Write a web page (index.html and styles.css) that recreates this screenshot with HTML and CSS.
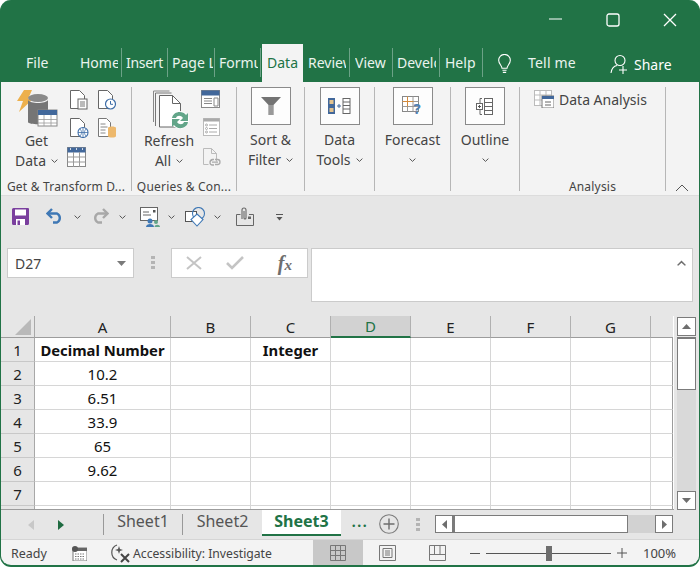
FILE: index.html
```html
<!DOCTYPE html>
<html lang="en">
<head>
<meta charset="utf-8">
<title>Excel</title>
<link rel="stylesheet" href="styles.css">
</head>
<body>
<svg class="defs" aria-hidden="true">
  <symbol id="chev" viewBox="0 0 7 4"><path d="M.6.6 3.5 3.4 6.4.6" fill="none" stroke="#555" stroke-width="1"/></symbol>
</svg>
<div class="app">
  <header class="titlebar">
    <svg class="winbtn" width="14" height="14" viewBox="0 0 14 14"><path d="M0 6h13" stroke="#fff" stroke-width="1.2"/></svg>
    <svg class="winbtn" width="14" height="14" viewBox="0 0 14 14"><rect x="1" y="1" width="12" height="12" rx="2" fill="none" stroke="#fff" stroke-width="1.3"/></svg>
    <svg class="winbtn" width="14" height="14" viewBox="0 0 14 14"><path d="M1 1l12 12M13 1 1 13" stroke="#fff" stroke-width="1.3"/></svg>
  </header>
  <nav class="tabs">
    <div class="tab tab-file"><span class="tab-label">File</span></div>
    <div class="tab w47 sep"><span class="tab-label">Home</span></div>
    <div class="tab w46 sep pl4 tight"><span class="tab-label">Insert</span></div>
    <div class="tab w47 sep pl4 tab-page"><span class="tab-label">Page Layout</span></div>
    <div class="tab w47 sep pl4 tab-form"><span class="tab-label">Formulas</span></div>
    <div class="tab tab-active"><span class="tab-label">Data</span></div>
    <div class="tab w47 sep"><span class="tab-label">Review</span></div>
    <div class="tab w43 sep"><span class="tab-label">View</span></div>
    <div class="tab w47 sep pl4"><span class="tab-label">Developer</span></div>
    <div class="tab w43 sep"><span class="tab-label">Help</span></div>
    <svg class="bulb" width="15" height="20" viewBox="0 0 17 24"><path d="M5.500 17c0-3-4-5-4-9.500a7 7 0 0 1 14 0c0 4.500-4 6.500-4 9.500zM6 19.500h5M6.500 22h4" fill="none" stroke="#fff" stroke-width="1.300"/></svg>
    <span class="tellme">Tell me</span>
    <div class="share">
      <svg width="20" height="20" viewBox="0 0 20 20"><circle cx="10" cy="6.500" r="5" fill="none" stroke="#fff" stroke-width="1.100"/><path d="M1 19c.5-4 3-7 6-7.500M13 12v8M9 16h8" fill="none" stroke="#fff" stroke-width="1.100"/></svg>
      <span>Share</span>
    </div>
  </nav>

  <section class="ribbon">
    <div class="group g1">
      <div class="group-body">
        <div class="bigbtn b-get">
          <svg width="42" height="42" viewBox="0 0 42 42">
            <path d="M7 0h8l-4 9h5L2 22l4-11H0z" fill="#edb04c"/>
            <ellipse cx="21" cy="8" rx="10" ry="4" fill="#8a8a8a"/>
            <path d="M11 10v22c0 3 20 3 20 0V10c-2 4-18 4-20 0z" fill="#757575"/>
            <rect x="21" y="20" width="19" height="16" fill="#fff" stroke="#888"/>
            <rect x="21" y="20" width="19" height="5" fill="#42689b"/>
            <path d="M21 29.500h19M21 33h19M27 25v11M34 25v11" stroke="#999" stroke-width=".8"/>
          </svg>
          <span class="btn-text">Get</span>
          <span class="btn-text">Data <svg class="chev"><use href="#chev"/></svg></span>
        </div>
        <div class="smallgrid">
          <svg width="20" height="20" viewBox="0 0 20 20"><path d="M1.500.500h9l5 5v13h-14z" fill="#fff" stroke="#666"/><rect x="9" y="9" width="9" height="10" fill="#fff" stroke="#666"/><path d="M11 12h5M11 14h5M11 16h5" stroke="#777"/></svg>
          <svg width="20" height="20" viewBox="0 0 20 20"><path d="M1.500.500h9l5 5v13h-14z" fill="#fff" stroke="#666"/><circle cx="13.500" cy="14" r="5" fill="#fff" stroke="#3f6ea8" stroke-width="1.200"/><path d="M13.500 11v3.300h2.500" fill="none" stroke="#3f6ea8"/></svg>
          <svg width="20" height="20" viewBox="0 0 20 20"><path d="M1.500.500h9l5 5v13h-14z" fill="#fff" stroke="#666"/><circle cx="14" cy="14.500" r="5" fill="#fff" stroke="#3f6ea8" stroke-width="1.100"/><path d="M9 14.500h10M14 9.500v10M11 11c2 2 2 5 0 7M17 11c-2 2-2 5 0 7" fill="none" stroke="#3f6ea8" stroke-width=".8"/></svg>
          <svg width="20" height="20" viewBox="0 0 20 20"><path d="M1.500.500h8l4 4v14h-12z" fill="#fff" stroke="#777"/><path d="M3.500 6h5M3.500 9h7M3.500 12h5M3.500 15h5" stroke="#888"/><path d="M11 10c0-2 8-2 8 0v8c0 2-8 2-8 0z" fill="#edb86c"/></svg>
          <svg class="wide" width="19" height="20" viewBox="0 0 19 20"><rect x=".5" y=".5" width="18" height="19" fill="#fff" stroke="#888"/><rect x=".5" y=".5" width="18" height="5" fill="#42689b"/><path d="M.5 10h18M.5 15h18M6.500 5v15M12.500 5v15" stroke="#999"/><path d="M3 2h1M9 2h1M15 2h1" stroke="#fff" stroke-width="1.500"/></svg>
        </div>
      </div>
      <div class="group-label">Get &amp; Transform D...</div>
    </div>

    <div class="group g2">
      <div class="group-body">
        <div class="bigbtn b-refresh">
          <svg width="38" height="42" viewBox="0 0 38 42">
            <path d="M.5 1h16M.5 1v31" fill="none" stroke="#888"/>
            <path d="M2.500 3h16M2.500 3v33" fill="none" stroke="#777"/>
            <path d="M6.500 5.500h13l8 8V37h-21z" fill="#fff" stroke="#666"/>
            <path d="M19.500 5.500v8h8" fill="none" stroke="#666"/>
            <circle cx="27" cy="30" r="9" fill="#fff"/>
            <path d="M19 28c1-7 11-8 14-3l2-2v8h-8l3-3c-2-3-6-3-7 0z" fill="#62a589"/>
            <path d="M35 32c-1 7-11 8-14 3l-2 2v-8h8l-3 3c2 3 6 3 7 0z" fill="#62a589"/>
          </svg>
          <span class="btn-text">Refresh</span>
          <span class="btn-text">All <svg class="chev"><use href="#chev"/></svg></span>
        </div>
        <div class="stack">
          <svg width="20" height="19" viewBox="0 0 20 19"><rect x=".5" y=".5" width="18" height="17" fill="#fff" stroke="#888"/><rect x=".5" y=".5" width="18" height="5" fill="#42689b"/><path d="M3 8.500h8M3 11h8M3 13.500h8M13 8h4v8h-4z" fill="none" stroke="#888"/></svg>
          <svg class="st2" width="18" height="19" viewBox="0 0 18 19"><rect x=".5" y=".5" width="16" height="17" fill="#fff" stroke="#bbb"/><rect x=".5" y=".5" width="16" height="3" fill="#aaa"/><path d="M6 7h8M6 10.500h8M6 14h8" stroke="#aaa"/><circle cx="3.500" cy="7" r="1" fill="none" stroke="#aaa"/><circle cx="3.500" cy="10.500" r="1" fill="none" stroke="#aaa"/><circle cx="3.500" cy="14" r="1" fill="none" stroke="#aaa"/></svg>
          <svg class="st3" width="18" height="19" viewBox="0 0 18 19"><path d="M.5.500h8l5 5v8M.5.500v16h5M8.500.500v5h5" fill="none" stroke="#bbb"/><path d="M7 14a2.500 2.500 0 0 1 2.500-2.500h1.500M11 17H9.500a2.500 2.500 0 0 1 0-5M12 11.500h2.500a2.500 2.500 0 0 1 0 5H12M9 14.200h6" fill="none" stroke="#aaa" stroke-width="1.300"/></svg>
        </div>
      </div>
      <div class="group-label">Queries &amp; Con...</div>
    </div>

    <div class="group g3">
      <div class="framed-col">
        <div class="frame">
          <svg width="22" height="22" viewBox="0 0 22 22"><path d="M1 2h20l-7.500 8v10h-5V10z" fill="#737373"/><path d="M9 10h4v10H9z" fill="#999"/></svg>
        </div>
        <span class="btn-text">Sort &amp;</span>
        <span class="btn-text">Filter <svg class="chev"><use href="#chev"/></svg></span>
      </div>
    </div>

    <div class="group g4">
      <div class="framed-col">
        <div class="frame">
          <svg width="24" height="20" viewBox="0 0 24 20"><rect x="0" y="2" width="7" height="16" fill="#42689b"/><rect x="1.500" y="4" width="4" height="4" fill="#e3c38f"/><rect x="1.500" y="12" width="4" height="4" fill="#e3c38f"/><path d="M9 10h4M11 8v4" stroke="#42689b"/><rect x="15" y="2.500" width="7" height="15" fill="#fff" stroke="#666"/><path d="M15 6h7M15 9.500h7M15 13h7" stroke="#666"/></svg>
        </div>
        <span class="btn-text">Data</span>
        <span class="btn-text">Tools <svg class="chev"><use href="#chev"/></svg></span>
      </div>
    </div>

    <div class="group g5">
      <div class="framed-col">
        <div class="frame">
          <svg width="22" height="20" viewBox="0 0 22 20"><rect x=".5" y=".5" width="16" height="15" fill="#fff" stroke="#888"/><path d="M.5 5.500h16M.5 10.500h16M5.500.500v15M11 .500v15" stroke="#999"/><path d="M.5 5.500h11M5.500.500v10" stroke="#d28a3c"/><text class="q" x="11.500" y="18">?</text></svg>
        </div>
        <span class="btn-text">Forecast</span>
        <span class="btn-chev"><svg class="chev"><use href="#chev"/></svg></span>
      </div>
    </div>

    <div class="group g6">
      <div class="framed-col">
        <div class="frame">
          <svg width="18" height="17" viewBox="0 0 18 17"><path d="M6 .500H4v16h2" fill="none" stroke="#666"/><rect x=".5" y="5.500" width="6" height="6" fill="#fff" stroke="#666"/><path d="M2 8.500h3M3.500 7v3" stroke="#555"/><rect x="8.500" y=".5" width="8" height="16" fill="#fff" stroke="#666"/><path d="M8.500 4.500h8M8.500 8.500h8M8.500 12.500h8" stroke="#666"/></svg>
        </div>
        <span class="btn-text">Outline</span>
        <span class="btn-chev"><svg class="chev"><use href="#chev"/></svg></span>
      </div>
    </div>

    <div class="group g7">
      <div class="analysis-row">
        <svg width="20" height="18" viewBox="0 0 20 18"><rect x=".5" y=".5" width="17" height="15" fill="#fff" stroke="#bbb"/><path d="M.5 5h17M.5 10h17M6 .500v15M12 .500v15" stroke="#bbb"/><rect x="8" y="6" width="12" height="12" fill="#fff" stroke="#777"/><rect x="8" y="6" width="12" height="3" fill="#42689b"/><path d="M11 12h6M11 15h6" stroke="#666"/></svg>
        <span class="btn-text">Data Analysis</span>
      </div>
      <div class="group-label">Analysis</div>
    </div>

    <div class="ribbon-end">
      <svg width="14" height="8" viewBox="0 0 14 8"><path d="M1 7 7 1l6 6" fill="none" stroke="#555"/></svg>
    </div>
  </section>

  <section class="grey">
    <div class="qat">
      <svg class="i-save" width="17" height="17" viewBox="0 0 17 17"><path d="M0 1.500A1.500 1.500 0 0 1 1.500 0H16a1 1 0 0 1 1 1v14.500a1.500 1.500 0 0 1-1.500 1.500h-14A1.500 1.500 0 0 1 0 15.500z" fill="#7a3f9e"/><rect x="3" y="1.500" width="11" height="6" fill="#fff"/><rect x="4" y="11" width="9" height="6" fill="#fff"/><rect x="5.500" y="12.500" width="2.500" height="4.500" fill="#7a3f9e"/></svg>
      <svg class="i-undo" width="18" height="16" viewBox="0 0 18 16"><path d="M6 1 1.500 5.500 6 10" fill="none" stroke="#3f78b5" stroke-width="2.400"/><path d="M2 5.500h9a5 5 0 0 1 0 9H7" fill="none" stroke="#3f78b5" stroke-width="2.400"/></svg>
      <svg class="chev c-undo"><use href="#chev"/></svg>
      <svg class="i-redo" width="18" height="16" viewBox="0 0 18 16"><path d="M12 1l4.500 4.500L12 10" fill="none" stroke="#a8a8a8" stroke-width="2.400"/><path d="M16 5.500H7a5 5 0 0 0 0 9h4" fill="none" stroke="#a8a8a8" stroke-width="2.400"/></svg>
      <svg class="chev c-redo"><use href="#chev"/></svg>
      <svg class="i-share" width="20" height="20" viewBox="0 0 20 20"><rect x=".5" y=".5" width="17" height="13" fill="#fff" stroke="#666"/><path d="M3 5h6M3 8h8" stroke="#666"/><rect x="13" y="3" width="2.500" height="2.500" fill="#555"/><circle cx="10" cy="14" r="2.500" fill="#3f78b5"/><path d="M6 20c0-4 8-4 8 0z" fill="#3f78b5"/><circle cx="16" cy="15" r="2" fill="#62a589"/><path d="M14.500 20c0-3 5.500-3 5.500 0z" fill="#62a589"/></svg>
      <svg class="chev c-share"><use href="#chev"/></svg>
      <svg class="i-shapes" width="21" height="20" viewBox="0 0 21 20"><rect x=".5" y="4.500" width="11" height="10" fill="#fff" stroke="#555"/><circle cx="13.500" cy="6.500" r="6" fill="none" stroke="#3f78b5" stroke-width="1.100"/><path d="M12 7l6 5.500-6 6.500-6-6.500z" fill="#fff" stroke="#3f78b5" stroke-width="1.100"/></svg>
      <svg class="chev c-shapes"><use href="#chev"/></svg>
      <svg class="i-clip" width="18" height="19" viewBox="0 0 18 19"><path d="M.5 7.500h4M13 7.500h4.500v11H.5v-11" fill="none" stroke="#666"/><path d="M6 12V3a2 2 0 0 1 4 0v8a1 1 0 0 1-2 0V4" fill="none" stroke="#666" stroke-width="1.100"/><rect x="12" y="9.500" width="3" height="2.500" fill="#666"/></svg>
      <svg class="i-more" width="7" height="7" viewBox="0 0 7 7"><path d="M0 .500h7" stroke="#555"/><path d="M.5 3h6l-3 3.500z" fill="#555"/></svg>
    </div>
    <div class="formula">
      <div class="namebox"><span>D27</span><svg width="9" height="5" viewBox="0 0 9 5"><path d="M0 0h9L4.500 5z" fill="#7a7a7a"/></svg></div>
      <div class="grip"><i></i><i></i><i></i></div>
      <div class="fxbox">
        <svg width="16" height="14" viewBox="0 0 16 14"><path d="M1 1l14 12M15 1 1 13" stroke="#c4c4c4" stroke-width="2"/></svg>
        <svg class="check" width="18" height="14" viewBox="0 0 18 14"><path d="M1 7l5 5L17 1" fill="none" stroke="#c4c4c4" stroke-width="2.600"/></svg>
        <span class="fx">f<small>x</small></span>
      </div>
      <div class="input">
        <svg width="9" height="6" viewBox="0 0 9 6"><path d="M0 5 4.500 .5 9 5 7.800 5.800 4.500 2.800 1.200 5.800z" fill="#6e6e6e"/></svg>
      </div>
    </div>
  </section>

  <section class="sheet-area">
    <div class="sheet">
      <div class="hd corner"><svg width="16" height="16" viewBox="0 0 16 16"><path d="M16 0v16H0z" fill="#b9b9b9"/></svg></div>
      <div class="hd ch">A</div><div class="hd ch">B</div><div class="hd ch">C</div><div class="hd ch ch-sel">D</div><div class="hd ch">E</div><div class="hd ch">F</div><div class="hd ch">G</div><div class="hd ch ch-last"></div>

      <div class="hd rh">1</div><div class="c b">Decimal Number</div><div class="c"></div><div class="c b">Integer</div><div class="c"></div><div class="c"></div><div class="c"></div><div class="c"></div><div class="c"></div>
      <div class="hd rh">2</div><div class="c">10.2</div><div class="c"></div><div class="c"></div><div class="c"></div><div class="c"></div><div class="c"></div><div class="c"></div><div class="c"></div>
      <div class="hd rh">3</div><div class="c">6.51</div><div class="c"></div><div class="c"></div><div class="c"></div><div class="c"></div><div class="c"></div><div class="c"></div><div class="c"></div>
      <div class="hd rh">4</div><div class="c">33.9</div><div class="c"></div><div class="c"></div><div class="c"></div><div class="c"></div><div class="c"></div><div class="c"></div><div class="c"></div>
      <div class="hd rh">5</div><div class="c">65</div><div class="c"></div><div class="c"></div><div class="c"></div><div class="c"></div><div class="c"></div><div class="c"></div><div class="c"></div>
      <div class="hd rh">6</div><div class="c">9.62</div><div class="c"></div><div class="c"></div><div class="c"></div><div class="c"></div><div class="c"></div><div class="c"></div><div class="c"></div>
      <div class="hd rh">7</div><div class="c"></div><div class="c"></div><div class="c"></div><div class="c"></div><div class="c"></div><div class="c"></div><div class="c"></div><div class="c"></div>
      <div class="hd rh"></div><div class="c"></div><div class="c"></div><div class="c"></div><div class="c"></div><div class="c"></div><div class="c"></div><div class="c"></div><div class="c"></div>
    </div>
    <div class="vscroll">
      <div class="sb-btn"><svg width="9" height="5" viewBox="0 0 9 5"><path d="M0 5h9L4.500 0z" fill="#6e6e6e"/></svg></div>
      <div class="vthumb"></div>
      <div class="vtrack"></div>
      <div class="sb-btn"><svg width="9" height="5" viewBox="0 0 9 5"><path d="M0 0h9L4.500 5z" fill="#6e6e6e"/></svg></div>
    </div>
  </section>

  <section class="sheetbar">
    <div class="navs">
      <svg width="6" height="10" viewBox="0 0 6 10"><path d="M6 0v10L0 5z" fill="#c8c8c8"/></svg>
      <svg width="6" height="10" viewBox="0 0 6 10"><path d="M0 0v10l6-5z" fill="#1f6b41"/></svg>
    </div>
    <div class="stab s1">Sheet1</div>
    <div class="stab s2">Sheet2</div>
    <div class="stab stab-on">Sheet3</div>
    <div class="more">...</div>
    <svg class="addsheet" width="20" height="20" viewBox="0 0 20 20"><circle cx="10" cy="10" r="9.300" fill="none" stroke="#7b7b7b" stroke-width="1.100"/><path d="M10 4.500v11M4.500 10h11" stroke="#6e6e6e" stroke-width="1.400"/></svg>
    <div class="grip small"><i></i><i></i><i></i></div>
    <div class="hscroll">
      <div class="sb-btn h"><svg width="5" height="9" viewBox="0 0 5 9"><path d="M5 0v9L0 4.500z" fill="#6e6e6e"/></svg></div>
      <div class="hthumb"></div>
      <div class="htrack"></div>
      <div class="sb-btn h"><svg width="5" height="9" viewBox="0 0 5 9"><path d="M0 0v9l5-4.500z" fill="#6e6e6e"/></svg></div>
    </div>
  </section>

  <footer class="status">
    <span class="st-ready">Ready</span>
    <svg class="st-macro" width="15" height="15" viewBox="0 0 15 15"><rect x="1" y="2" width="14" height="13" fill="#fff" stroke="#777"/><rect x="1" y="2" width="14" height="3" fill="#666"/><circle cx="3" cy="3" r="3" fill="#555"/><path d="M3 8h10M3 10.500h10M3 13h10" stroke="#777" stroke-dasharray="1.500 1"/></svg>
    <svg class="st-acc" width="20" height="20" viewBox="0 0 20 20"><path d="M7 2a8 8 0 0 0 0 15" fill="none" stroke="#555" stroke-width="1.200"/><path d="M9 3l1 3 3 1-3 1-1 3-1-3-3-1 3-1z" fill="#555"/><path d="M11 11l8 8M19 11l-8 8" stroke="#444" stroke-width="2"/></svg>
    <span class="st-acc-t">Accessibility: Investigate</span>
    <div class="view-on"><svg width="16" height="16" viewBox="0 0 16 16"><path d="M.5.500h15v15H.5zM.5 5.500h15M.5 10.500h15M5.500.500v15M10.500.500v15" fill="none" stroke="#777"/></svg></div>
    <svg class="v2" width="17" height="16" viewBox="0 0 17 16"><path d="M.5.500h16v15H.5z" fill="none" stroke="#777"/><path d="M4 3.500h9v9H4zM6 6h5M6 8h5M6 10h5" fill="none" stroke="#777"/></svg>
    <svg class="v3" width="17" height="16" viewBox="0 0 17 16"><path d="M.5.500h16v15H.5zM.5 9.500h16M5.500.500v9M11 .500v9" fill="none" stroke="#777"/></svg>
    <div class="zoomer">
      <span class="z-minus"></span>
      <div class="z-track"><span class="z-thumb"></span></div>
      <svg width="10" height="10" viewBox="0 0 10 10"><path d="M0 5h10M5 0v10" stroke="#555"/></svg>
    </div>
    <span class="st-pct">100%</span>
  </footer>
</div>
</body>
</html>
```

FILE: styles.css
```css
* { box-sizing: border-box; }
html, body { margin: 0; padding: 0; background: #fff; }
body { width: 700px; height: 567px; overflow: hidden; font-family: "Noto Sans", "Open Sans", sans-serif; color: #333; }
.defs { display: none; }
svg { display: block; flex: none; }

.app {
  width: 700px; height: 567px;
  display: flex; flex-direction: column;
  background: #217346;
  border-radius: 11px;
  border: solid #217346;
  border-width: 0 1px 2px 1px;
  overflow: hidden;
}

.titlebar { height: 44px; flex: none; display: flex; justify-content: flex-end; align-items: flex-start; padding: 13px 22px 0 0; gap: 43px; }

.tabs { height: 38px; flex: none; display: flex; align-items: stretch; color: #fff; font-size: 14px; }
.tab { display: flex; align-items: center; padding: 0 4px 2px 5px; position: relative; flex: none; color: #eaf3ee; }
.tab-label { display: block; overflow: hidden; white-space: nowrap; flex: 1; }
.tab-file { width: 74px; padding-left: 25px; }
.w43 { width: 43px; } .w46 { width: 46px; } .w47 { width: 47px; }
.pl4 { padding-left: 4px; }
.tight { letter-spacing: -.3px; }
.tab-page { padding-right: 2px; }
.sep::after { content: ""; position: absolute; right: 0; top: 4px; bottom: 5px; width: 1px; background: #6ca287; }
.tab-form::after { right: 1px; }
.tab-active { width: 41px; background: #f3f3f3; color: #217346; }
.bulb { margin: 10px 0 0 14px; }
.tellme { margin: 9px 0 0 16px; color: #eaf3ee; letter-spacing: .2px; }
.share { display: flex; align-items: center; gap: 4px; margin: 9px 0 0 34px; height: 22px; }

.ribbon { height: 114px; flex: none; display: flex; background: #f3f3f3; padding: 5px 0; border-bottom: 1px solid #dcdcdc; }
.group { display: flex; flex-direction: column; border-right: 1px solid #b6b6b6; flex: none; height: 104px; position: relative; }
.g1 { width: 131px; } .g2 { width: 105px; } .g3 { width: 68px; } .g4 { width: 70px; } .g5 { width: 76px; } .g6 { width: 69px; } .g7 { width: 146px; }
.group-body { flex: 1; display: flex; }
.group-label { height: 18px; margin: -4px 0 -5px; padding-top: 5px; box-sizing: content-box; font-size: 12px; line-height: 18px; text-align: center; white-space: nowrap; color: #444; letter-spacing: .2px; }
.btn-text { font-size: 14px; line-height: 20px; white-space: nowrap; display: flex; align-items: center; justify-content: center; gap: 5px; color: #444; }
.chev { width: 7px; height: 4px; }
.bigbtn { display: flex; flex-direction: column; align-items: center; }
.b-get { width: 71px; padding-top: 3px; }
.b-get > svg { margin: 0 0 -1px 3px; }
.smallgrid { display: grid; grid-template-columns: 28px 20px; grid-auto-rows: 28px; padding-top: 3px; margin-left: -3px; }
.smallgrid .wide { margin: 1px 0 0 -2px; }
.b-refresh { width: 68px; padding: 3px 0 0 6px; }
.b-refresh > svg { margin: 0 0 -1px 6px; }
.stack { display: flex; flex-direction: column; padding: 3px 0 0 1px; }
.st2 { margin: 9px 0 0 2px; }
.st3 { margin: 11px 0 0 2px; }
.framed-col { display: flex; flex-direction: column; align-items: center; }
.frame { width: 40px; height: 38px; background: #fdfdfd; border: 1px solid #8a8a8a; display: flex; align-items: center; justify-content: center; margin-bottom: 5px; }
.btn-chev { height: 20px; display: flex; align-items: center; justify-content: center; }
.q { font: bold 15px "Noto Sans", sans-serif; fill: #4f81b3; }
.analysis-row { display: flex; align-items: flex-start; gap: 5px; padding: 3px 0 0 14px; flex: 1; }
.ribbon-end { flex: 1; display: flex; align-items: flex-end; justify-content: flex-end; padding: 0 10px 0 0; }
.ribbon-end svg { margin-bottom: -2px; }

.grey { height: 120px; flex: none; background: #e6e6e6; display: flex; flex-direction: column; }
.qat { height: 52px; flex: none; display: flex; align-items: flex-start; padding: 12px 0 0 11px; }
.c-undo, .c-redo, .c-share, .c-shapes { margin-top: 7px; }
.i-undo { margin-left: 17px; }
.c-undo { margin-left: 10px; }
.i-redo { margin-left: 10px; }
.c-redo { margin-left: 10px; }
.i-share { margin: -1px 0 0 14px; }
.c-share { margin-left: 8px; }
.i-shapes { margin: -1px 0 0 10px; }
.c-shapes { margin-left: 8px; }
.i-clip { margin: -1px 0 0 15px; }
.i-more { margin: 6px 0 0 22px; }

.formula { display: flex; align-items: flex-start; padding-left: 6px; height: 54px; }
.namebox { width: 127px; height: 30px; background: #fff; border: 1px solid #cbcbcb; display: flex; align-items: center; justify-content: space-between; padding: 0 7px; font-size: 14px; color: #444; }
.grip { width: 37px; display: flex; flex-direction: column; gap: 2px; align-items: center; padding-top: 8px; }
.grip i { width: 4px; height: 3px; background: #b4b4b4; }
.fxbox { width: 137px; height: 30px; background: #fff; border: 1px solid #cbcbcb; display: flex; align-items: center; padding: 0 15px 0 14px; justify-content: space-between; }
.check { margin-left: 0; position: relative; left: -5px; }
.fx { font: italic bold 20px "Liberation Serif", serif; color: #6e6e6e; }
.fx small { font-size: 15px; }
.input { width: 382px; height: 54px; margin-left: 3px; background: #fff; border: 1px solid #cbcbcb; padding: 11px 6px 0 0; display: flex; justify-content: flex-end; align-items: flex-start; }

.sheet-area { flex: none; display: flex; background: #e6e6e6; padding-top: 14px; height: 208px; margin-top: -14px; }
.sheet { width: 673px; height: 194px; display: grid; grid-template-columns: 34px 136px repeat(6, 80px) 22px; grid-template-rows: 22px repeat(7, 24px) 4px; background: #fff; border-bottom: 1px solid #9c9c9c; overflow: hidden; }
.hd { background: #e6e6e6; display: flex; align-items: center; justify-content: center; font-size: 15px; color: #222; }
.corner { align-items: flex-end; justify-content: flex-end; padding: 0 3px 2px 0; border-right: 1px solid #a8a8a8; border-bottom: 1px solid #9c9c9c; }
.ch { border-right: 1px solid #b0b0b0; border-bottom: 1px solid #9c9c9c; }
.ch-sel { background: #d2d2d2; color: #217346; border-bottom: 2px solid #217346; }
.ch-last { border-right: 0; }
.rh { border-right: 1px solid #a8a8a8; border-bottom: 1px solid #c8c8c8; }
.c { border-right: 1px solid #d6d6d6; border-bottom: 1px solid #d6d6d6; display: flex; align-items: center; justify-content: center; font-size: 15px; color: #111; white-space: nowrap; overflow: hidden; }
.c.b { font-weight: 700; font-size: 14.800px; }
.c:nth-child(9n) { border-right: 1px solid #9c9c9c; }
.vscroll { width: 25px; padding: 1px 3px 0 3px; display: flex; flex-direction: column; height: 194px; flex: none; }
.sb-btn { width: 19px; height: 19px; background: #fff; border: 1px solid #7b7b7b; display: flex; align-items: center; justify-content: center; flex: none; }
.vthumb { height: 53px; background: #fff; border: 1px solid #7b7b7b; border-top-width: 2px; flex: none; margin-top: 1px; }
.vtrack { flex: 1; background: #d9d9d9; }

.sheetbar { height: 30px; flex: none; background: #e6e6e6; display: flex; align-items: flex-start; border-bottom: 1px solid #d5d5d5; }
.navs { width: 103px; height: 21px; margin-top: 4px; display: flex; align-items: center; gap: 24px; padding-left: 27px; border-right: 1px solid #999; flex: none; }
.stab { font-size: 16px; display: flex; align-items: center; justify-content: center; color: #555; flex: none; }
.s1 { width: 79px; height: 21px; padding-bottom: 7px; border-right: 1px solid #999; margin-top: 4px; }
.s2 { width: 79px; height: 21px; padding-bottom: 7px; margin-top: 4px; }
.stab-on { width: 79px; height: 26px; background: #fff; color: #217346; font-weight: 700; border-bottom: 2px solid #217346; padding-bottom: 2px; }
.more { width: 38px; text-align: center; font-size: 14px; font-weight: 700; line-height: 24px; color: #217346; letter-spacing: 1.500px; }
.addsheet { margin-top: 4px; }
.grip.small { width: 38px; padding-top: 8px; }
.hscroll { width: 238px; height: 18px; margin: 5px 0 0 -2px; display: flex; flex: none; }
.sb-btn.h { width: 18px; height: 18px; }
.hthumb { width: 175px; background: #fff; border: 1px solid #7b7b7b; border-left-width: 2px; flex: none; }
.htrack { flex: 1; background: #d2d2d2; }

.status { flex: 1; background: #f3f3f3; display: flex; align-items: center; font-size: 12.500px; color: #444; min-height: 0; padding-top: 1px; }
.st-ready { margin-left: 10px; width: 61px; }
.st-acc { margin-left: 23px; }
.st-acc-t { margin-left: 3px; width: 180px; white-space: nowrap; font-size: 12.200px; }
.view-on { width: 50px; align-self: stretch; background: #c8c8c8; display: flex; align-items: center; justify-content: center; margin-top: -1px; }
.v2 { margin-left: 16px; }
.v3 { margin-left: 33px; }
.zoomer { display: flex; align-items: center; margin-left: 24px; width: 157px; }
.z-minus { width: 10px; height: 1px; background: #555; }
.z-track { width: 125px; height: 1px; background: #555; margin: 0 6px; position: relative; }
.z-thumb { position: absolute; left: 60px; top: -7px; width: 6px; height: 15px; background: #6e6e6e; }
.st-pct { margin-left: 16px; font-size: 13px; }
```
